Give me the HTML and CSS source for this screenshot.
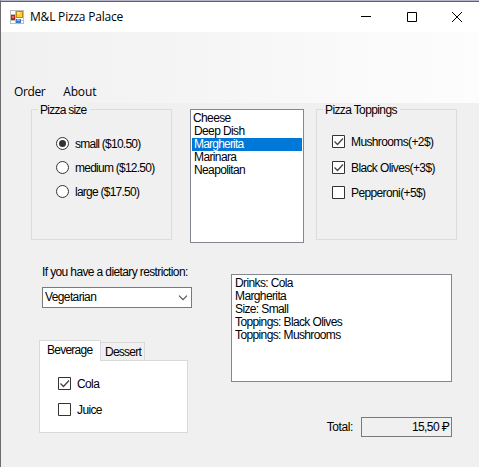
FILE: index.html
```html
<!DOCTYPE html>
<html lang="en">
<head>
<meta charset="utf-8">
<title>M&amp;L Pizza Palace</title>
<link rel="stylesheet" href="styles.css">
</head>
<body>
<div class="window">
  <header class="titlebar">
    <svg class="app-icon" width="14" height="14" viewBox="0 0 14 14" shape-rendering="crispEdges">
      <path fill="#fff" stroke="#bdbdbd" d="M.5.5h13v13H.5zM5.500 0v14M0 4.500h6M0 10.500h14"/>
      <path fill="#b3261c" d="M1 5h4v5H1z"/><path fill="#e87464" d="M2 6h2v2H2z"/>
      <path fill="#c58a00" d="M6 1h7v7H6z"/><path fill="#ffcf3f" d="M7 2h5v5H7z"/><path fill="#ffe391" d="M7 2h3v2H7z"/>
      <path fill="#3d78cf" d="M6 9h5v4H6z"/><path fill="#81b2f5" d="M7 9h3v2H7z"/>
    </svg>
    <h1 class="title">M&amp;L Pizza Palace</h1>
    <div class="controls">
      <svg width="10" height="10"><path d="M0 4.500h10"/></svg>
      <svg width="10" height="10"><path d="M.5.5h9v9h-9z"/></svg>
      <svg width="10" height="10"><path d="M0 0l10 10M10 0L0 10"/></svg>
    </div>
  </header>
  <nav class="menu"><span>Order</span><span>About</span></nav>
  <main class="form">
    <div class="row-top">
      <section class="group sizes">
        <h2 class="legend">Pizza size</h2>
        <label class="option"><i class="radio on"></i><span>small ($10.50)</span></label>
        <label class="option"><i class="radio"></i><span>medium ($12.50)</span></label>
        <label class="option"><i class="radio"></i><span>large ($17.50)</span></label>
      </section>
      <ul class="listbox pizzas">
        <li class="first">Cheese</li><li>Deep Dish</li><li class="selected">Margherita</li><li>Marinara</li><li>Neapolitan</li>
      </ul>
      <section class="group toppings">
        <h2 class="legend">Pizza Toppings</h2>
        <label class="option"><svg class="box" width="13" height="13"><path class="frame" d="M.5.5h12v12H.5z"/><path class="tick" d="M2.500 6.500l3 3 5.500-6"/></svg><span>Mushrooms(+2$)</span></label>
        <label class="option"><svg class="box" width="13" height="13"><path class="frame" d="M.5.5h12v12H.5z"/><path class="tick" d="M2.500 6.500l3 3 5.500-6"/></svg><span>Black Olives(+3$)</span></label>
        <label class="option"><svg class="box" width="13" height="13"><path class="frame" d="M.5.5h12v12H.5z"/></svg><span>Pepperoni(+5$)</span></label>
      </section>
    </div>
    <div class="row-bottom">
      <div class="left">
        <div class="diet">If you have a dietary restriction:</div>
        <div class="combo"><span>Vegetarian</span><svg width="10" height="6"><path d="M1 .7l4 4 4-4"/></svg></div>
        <div class="tabs"><span class="tab active">Beverage</span><span class="tab">Dessert</span></div>
        <div class="panel">
          <label class="option"><svg class="box" width="13" height="13"><path class="frame" d="M.5.5h12v12H.5z"/><path class="tick" d="M2.500 6.500l3 3 5.500-6"/></svg><span>Cola</span></label>
          <label class="option"><svg class="box" width="13" height="13"><path class="frame" d="M.5.5h12v12H.5z"/></svg><span>Juice</span></label>
        </div>
      </div>
      <div class="right">
        <ul class="listbox summary">
          <li>Drinks: Cola</li><li>Margherita</li><li>Size: Small</li><li>Toppings: Black Olives</li><li>Toppings: Mushrooms</li>
        </ul>
        <div class="total"><span>Total:</span><output>15,50 ₽</output></div>
      </div>
    </div>
  </main>
</div>
</body>
</html>
```
FILE: styles.css
```css
* { box-sizing: border-box; }
body {
  margin: 0;
  overflow: hidden;
  color: #000;
  font: 12px/13px "Liberation Sans", Roboto, sans-serif;
  letter-spacing: -0.62px;
  white-space: nowrap;
}
h1, h2, ul { margin: 0; padding: 0; font: inherit; list-style: none; }
svg { display: block; flex: none; }
.window {
  display: flex;
  flex-direction: column;
  height: 467px;
  border-left: 1px solid #6b6b70;
  border-top: 1px solid #b3b6c8;
  background: #f0f0f0;
}
.titlebar {
  display: flex;
  align-items: center;
  height: 31px;
  padding: 0 17px 0 9px;
  border-top: 1px solid #606070;
  background: #fff;
}
.title {
  margin-left: 6px;
  font: 12px/16px "Open Sans", sans-serif;
  letter-spacing: -0.2px;
}
.controls { display: flex; gap: 35.5px; margin-left: auto; }
.controls path { fill: none; stroke: #000; }
.menu {
  display: flex;
  align-items: flex-end;
  gap: 18px;
  height: 71px;
  padding: 0 0 3px 13px;
  background: linear-gradient(90deg, #f0f0f0, #fdfdfd);
  font: 12px/16px "Open Sans", sans-serif;
  letter-spacing: -0.15px;
}
.menu span:first-child { letter-spacing: -0.4px; }
.form { padding-top: 6px; }
.row-top { display: flex; height: 134px; padding-left: 30px; }
.group {
  display: flex;
  flex-direction: column;
  width: 141px;
  height: 131px;
  border: 1px solid #dcdcdc;
}
.legend {
  align-self: flex-start;
  height: 13px;
  margin: -6px 0 0 6px;
  padding: 0 3px 0 2px;
  background: #f0f0f0;
}
.option { display: flex; align-items: center; gap: 6px; height: 13px; }
.option span { padding-top: 2px; }
.sizes { letter-spacing: -0.75px; }
.sizes .option { margin: 0 0 11px 24px; }
.sizes .legend + .option { margin-top: 20px; }
.radio {
  display: flex;
  align-items: center;
  justify-content: center;
  width: 13px;
  height: 13px;
  border: 1px solid #333;
  border-radius: 50%;
  background: #fff;
}
.radio.on::before {
  width: 7px;
  height: 7px;
  border-radius: 50%;
  background: #333;
  content: "";
}
.frame { fill: #fff; stroke: #333; }
.tick { fill: none; stroke: #444; stroke-width: 1.3; }
.listbox { border: 1px solid #828790; background: #fff; }
.pizzas { width: 114px; height: 134px; margin: 0 12px 0 18px; padding: 2px 1px; }
.pizzas li { height: 13px; padding-left: 2px; }
.pizzas .first { padding-left: 1px; }
.pizzas .selected { background: #0078d7; color: #fff; letter-spacing: -0.8px; }
.toppings .option { margin: 0 0 13px 15px; }
.toppings .legend + .option { margin-top: 18px; }
.toppings .option:last-child { margin-top: -1px; }
.row-bottom { display: flex; }
.left { width: 149px; margin-left: 38px; padding-top: 23px; }
.diet { margin-left: 3px; }
.combo {
  display: flex;
  align-items: center;
  justify-content: space-between;
  width: 150px;
  height: 21px;
  margin: 8px 0 32px 3px;
  padding: 0 3px 0 2px;
  border: 1px solid #7a7a7a;
  background: #fff;
}
.combo path { fill: none; stroke: #555; stroke-width: 1.2; }
.tabs { display: flex; align-items: flex-end; height: 20px; letter-spacing: -0.75px; }
.tab {
  width: 44px;
  height: 18px;
  padding: 3px 0 0 4px;
  border: 1px solid #d9d9d9;
  border-width: 1px 1px 0 0;
}
.tab.active {
  z-index: 1;
  width: 62px;
  height: 21px;
  margin-bottom: -1px;
  padding-left: 7px;
  border-left-width: 1px;
  background: #fff;
}
.panel {
  height: 73px;
  padding: 16px 0 0 18px;
  border: 1px solid #d9d9d9;
  background: #fff;
}
.panel .option { margin-bottom: 13px; }
.right { width: 221px; margin-left: 43px; padding-top: 31px; }
.summary { height: 108px; padding: 2px 3px; }
.total {
  display: flex;
  align-items: center;
  justify-content: flex-end;
  gap: 8px;
  height: 20px;
  margin-top: 35px;
}
.total > span { letter-spacing: -0.4px; }
.total output {
  width: 91px;
  height: 20px;
  padding: 3px 2px 0 0;
  border: 1px solid #7a7a7a;
  text-align: right;
}
```
